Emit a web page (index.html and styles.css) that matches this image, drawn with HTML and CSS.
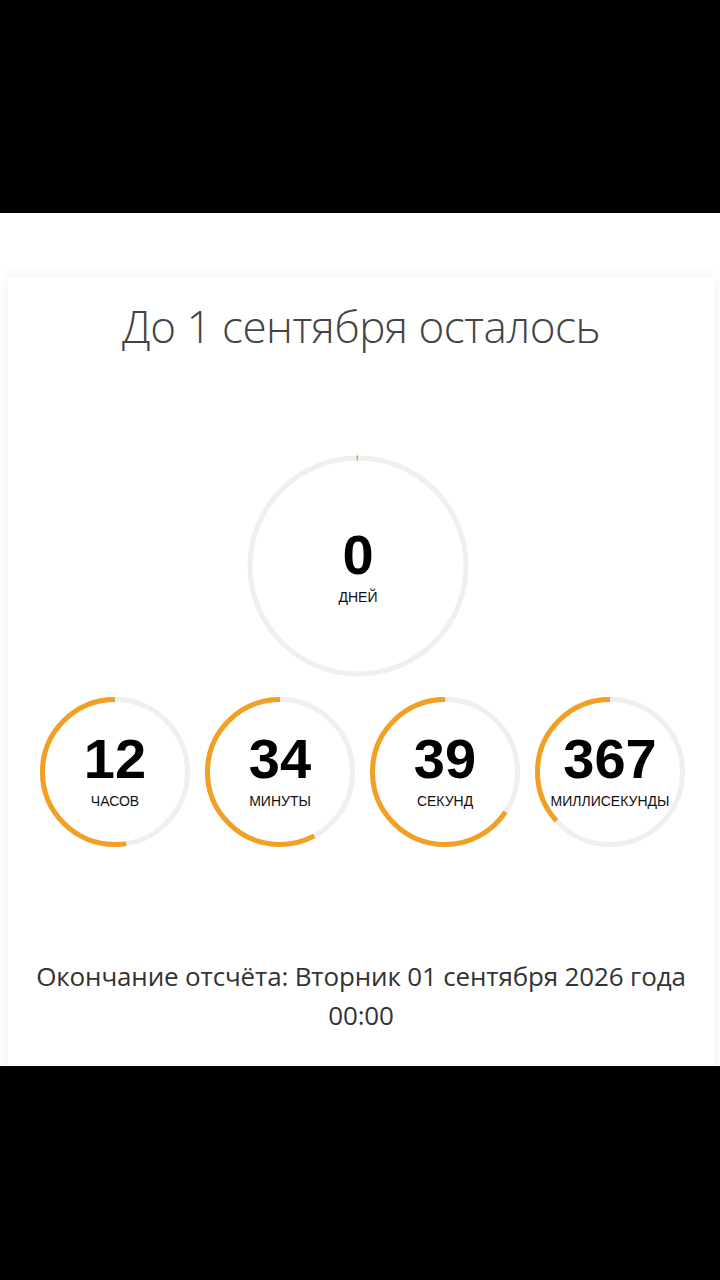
FILE: index.html
```html
<!DOCTYPE html>
<html lang="ru">
<head>
<meta charset="utf-8">
<title>До 1 сентября осталось</title>
<link rel="stylesheet" href="styles.css">
</head>
<body>
<div class="bar-top"></div>
<main class="stage">
  <section class="card">
    <h1 class="title">До 1 сентября осталось</h1>
    <div class="days">
      <div class="ring ring-big">
        <svg class="ring-svg" viewBox="0 0 222 222" width="222" height="222">
          <circle class="track" cx="111" cy="111" r="108" stroke-width="5"/>
          <circle class="progress" cx="111" cy="111" r="108" stroke-width="5" stroke-dasharray="1.5 1000" transform="translate(222 0) scale(-1 1) rotate(-90 111 111)"/>
        </svg>
        <div class="ring-text">
          <span class="num">0</span>
          <span class="label">ДНЕЙ</span>
        </div>
      </div>
    </div>
    <div class="units">
      <div class="ring">
        <svg class="ring-svg" viewBox="0 0 150 150" width="150" height="150">
          <circle class="track" cx="75" cy="75" r="72.5" stroke-width="5"/>
          <circle class="progress" cx="75" cy="75" r="72.5" stroke-width="5" stroke-dasharray="238.7 1000" transform="translate(150 0) scale(-1 1) rotate(-90 75 75)"/>
        </svg>
        <div class="ring-text ring-text-small">
          <span class="num">12</span>
          <span class="label">ЧАСОВ</span>
        </div>
      </div>
      <div class="ring">
        <svg class="ring-svg" viewBox="0 0 150 150" width="150" height="150">
          <circle class="track" cx="75" cy="75" r="72.5" stroke-width="5"/>
          <circle class="progress" cx="75" cy="75" r="72.5" stroke-width="5" stroke-dasharray="263.1 1000" transform="translate(150 0) scale(-1 1) rotate(-90 75 75)"/>
        </svg>
        <div class="ring-text ring-text-small">
          <span class="num">34</span>
          <span class="label">МИНУТЫ</span>
        </div>
      </div>
      <div class="ring">
        <svg class="ring-svg" viewBox="0 0 150 150" width="150" height="150">
          <circle class="track" cx="75" cy="75" r="72.5" stroke-width="5"/>
          <circle class="progress" cx="75" cy="75" r="72.5" stroke-width="5" stroke-dasharray="298.9 1000" transform="translate(150 0) scale(-1 1) rotate(-90 75 75)"/>
        </svg>
        <div class="ring-text ring-text-small">
          <span class="num">39</span>
          <span class="label">СЕКУНД</span>
        </div>
      </div>
      <div class="ring">
        <svg class="ring-svg" viewBox="0 0 150 150" width="150" height="150">
          <circle class="track" cx="75" cy="75" r="72.5" stroke-width="5"/>
          <circle class="progress" cx="75" cy="75" r="72.5" stroke-width="5" stroke-dasharray="167.2 1000" transform="translate(150 0) scale(-1 1) rotate(-90 75 75)"/>
        </svg>
        <div class="ring-text ring-text-small">
          <span class="num">367</span>
          <span class="label">МИЛЛИСЕКУНДЫ</span>
        </div>
      </div>
    </div>
    <p class="end">Окончание отсчёта: Вторник 01 сентября 2026 года<br>00:00</p>
  </section>
</main>
<div class="bar-bottom"></div>
</body>
</html>
```

FILE: styles.css
```css
html, body {
  margin: 0;
  padding: 0;
  background: #000;
}

body {
  width: 720px;
  height: 1280px;
  overflow: hidden;
  font-family: "Open Sans", "Liberation Sans", sans-serif;
}

.bar-top {
  height: 213px;
  background: #000;
}

.stage {
  height: 853px;
  background: #fff;
  overflow: hidden;
  padding-top: 64px;
  box-sizing: border-box;
}

.card {
  margin: 0 6px 0 8px;
  background: #fff;
  box-shadow: 0 0 14px rgba(0, 0, 0, 0.07);
  padding: 19px 0 40px;
  display: flex;
  flex-direction: column;
  align-items: center;
}

.title {
  margin: 0;
  font-family: "Open Sans", sans-serif;
  font-weight: 300;
  font-size: 44px;
  line-height: 60px;
  color: #444;
  letter-spacing: -0.5px;
}

.days {
  margin-top: 99px;
  display: flex;
  justify-content: center;
  width: 100%;
  padding-right: 6px;
  box-sizing: border-box;
}

.ring {
  position: relative;
  width: 150px;
  height: 150px;
}

.ring-big {
  width: 222px;
  height: 222px;
}

.ring-svg {
  display: block;
}

.track {
  fill: none;
  stroke: #efefef;
}

.progress {
  fill: none;
  stroke: #f2a024;
}

.ring-text {
  position: absolute;
  inset: 0;
  display: flex;
  flex-direction: column;
  align-items: center;
  justify-content: center;
  font-family: "Liberation Sans", Arial, sans-serif;
  color: #000;
}

.ring-text-small {
  padding-bottom: 4px;
}

.num {
  font-weight: 700;
  font-size: 56px;
  line-height: 56px;
}

.label {
  margin-top: 6px;
  font-size: 14px;
  line-height: 16px;
  color: #111;
  white-space: nowrap;
}

.units {
  margin-top: 20px;
  display: flex;
  gap: 15px;
  justify-content: center;
  width: 100%;
  padding-left: 3px;
  box-sizing: border-box;
}

.end {
  margin: 110px 0 0;
  font-family: "Open Sans", sans-serif;
  font-size: 26px;
  line-height: 39px;
  color: #333;
  text-align: center;
  letter-spacing: -0.15px;
}

.bar-bottom {
  height: 214px;
  background: #000;
}
```
